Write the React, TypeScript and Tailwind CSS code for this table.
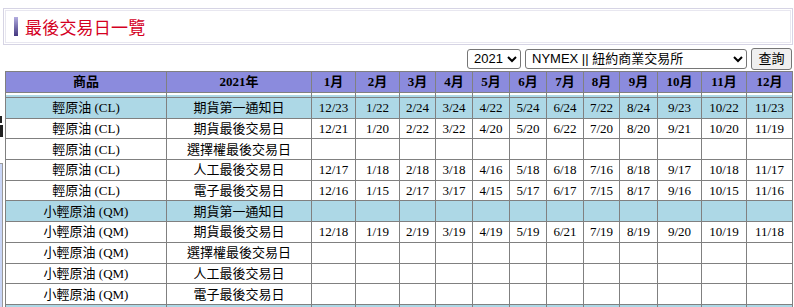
import { Fragment } from 'react';

const months = ['1月', '2月', '3月', '4月', '5月', '6月', '7月', '8月', '9月', '10月', '11月', '12月'];
const colWidths = [161, 145, 44, 44, 36, 37, 37, 37, 37, 36, 38, 44, 45, 46];

type Row = { product: string; kind: string; dates: string[]; first?: boolean };

const blank = Array(12).fill('');

const rows: Row[] = [
  { product: '輕原油 (CL)', kind: '期貨第一通知日', first: true, dates: ['12/23', '1/22', '2/24', '3/24', '4/22', '5/24', '6/24', '7/22', '8/24', '9/23', '10/22', '11/23'] },
  { product: '輕原油 (CL)', kind: '期貨最後交易日', dates: ['12/21', '1/20', '2/22', '3/22', '4/20', '5/20', '6/22', '7/20', '8/20', '9/21', '10/20', '11/19'] },
  { product: '輕原油 (CL)', kind: '選擇權最後交易日', dates: blank },
  { product: '輕原油 (CL)', kind: '人工最後交易日', dates: ['12/17', '1/18', '2/18', '3/18', '4/16', '5/18', '6/18', '7/16', '8/18', '9/17', '10/18', '11/17'] },
  { product: '輕原油 (CL)', kind: '電子最後交易日', dates: ['12/16', '1/15', '2/17', '3/17', '4/15', '5/17', '6/17', '7/15', '8/17', '9/16', '10/15', '11/16'] },
  { product: '小輕原油 (QM)', kind: '期貨第一通知日', first: true, dates: blank },
  { product: '小輕原油 (QM)', kind: '期貨最後交易日', dates: ['12/18', '1/19', '2/19', '3/19', '4/19', '5/19', '6/21', '7/19', '8/19', '9/20', '10/19', '11/18'] },
  { product: '小輕原油 (QM)', kind: '選擇權最後交易日', dates: blank },
  { product: '小輕原油 (QM)', kind: '人工最後交易日', dates: blank },
  { product: '小輕原油 (QM)', kind: '電子最後交易日', dates: blank },
  // next product starts just below the fold, only its background shows
  { product: '', kind: '', first: true, dates: blank },
];

export default function App() {
  return (
    <div className="w-[794px] h-[307px] overflow-hidden bg-white pt-[8px] font-['Liberation_Serif','Noto_Sans_CJK_TC',serif] text-black">
      {/* title box */}
      <div className="ml-[3px] w-[790px] border border-[#d6d4e4] p-px">
        <div className="h-[33px] border border-[#e8e7f0] flex items-center pl-[8px]">
          <div className="w-[4px] h-[19px] bg-gradient-to-b from-[#b4aee0] to-[#45377f]" />
          <h1 className="ml-[7px] text-[17px] leading-none tracking-[0.2px] text-[#d4001f] font-['Noto_Sans_CJK_TC',sans-serif]">
            最後交易日一覽
          </h1>
        </div>
      </div>

      {/* query controls */}
      <div className="mt-[2px] h-[23px] flex items-center justify-end gap-[4px] pr-[2px] font-['Liberation_Sans','Noto_Sans_CJK_TC',sans-serif] text-[13px]">
        <select className="w-[54px] h-[20px] border border-[#767676] rounded-[3px] bg-white pl-[2px]" defaultValue="2021">
          <option>2021</option>
          <option>2020</option>
        </select>
        <select className="w-[222px] h-[20px] border border-[#767676] rounded-[3px] bg-white pl-[2px]" defaultValue="NYMEX">
          <option value="NYMEX">NYMEX || 紐約商業交易所</option>
        </select>
        <button className="w-[41px] h-[22px] border border-[#767676] rounded-[3px] bg-[#efefef] text-[13px]">
          查詢
        </button>
      </div>

      <div className="flex mt-px">
        {/* stray fragments on the left edge */}
        <div className="w-[5px] shrink-0">
          <div className="mt-[45px] w-[2px] h-[7px] bg-[#222]" />
          <div className="mt-[2px] w-[3px] h-[12px] bg-[#222]" />
          <div className="mt-[26px] w-[3px] h-[160px] border-t border-r border-[#9a9a9a] bg-[#c9d6f7]" />
        </div>

        <table className="table-fixed border-collapse w-[787px] text-[13px]">
          <colgroup>
            {colWidths.map((w, i) => (
              <col key={i} style={{ width: w }} />
            ))}
          </colgroup>
          <thead>
            <tr className="h-[21px] bg-[#8b8bdd]">
              <th className="border border-[#808080] p-0 font-bold">商品</th>
              <th className="border border-[#808080] p-0 font-bold">2021年</th>
              {months.map((m) => (
                <th key={m} className="border border-[#808080] p-0 font-bold">
                  {m}
                </th>
              ))}
            </tr>
          </thead>
          <tbody>
            <tr className="h-[5px]">
              {colWidths.map((_, i) => (
                <td key={i} className="border border-[#808080] p-0 align-top">
                  <div className="h-[2px] bg-white" />
                  <div className="h-[2px] bg-[#add8e6]" />
                </td>
              ))}
            </tr>
            {rows.map((r, idx) => (
              <Fragment key={idx}>
                <tr className={`h-[20.7px] ${r.first ? 'bg-[#add8e6]' : 'bg-white'}`}>
                  <td className="border border-[#808080] p-0 text-center leading-[19px]">{r.product}</td>
                  <td className="border border-[#808080] p-0 text-center leading-[19px]">{r.kind}</td>
                  {r.dates.map((d, j) => (
                    <td key={j} className="border border-[#808080] p-0 text-center leading-[19px]">
                      {d}
                    </td>
                  ))}
                </tr>
              </Fragment>
            ))}
          </tbody>
        </table>
      </div>
    </div>
  );
}
